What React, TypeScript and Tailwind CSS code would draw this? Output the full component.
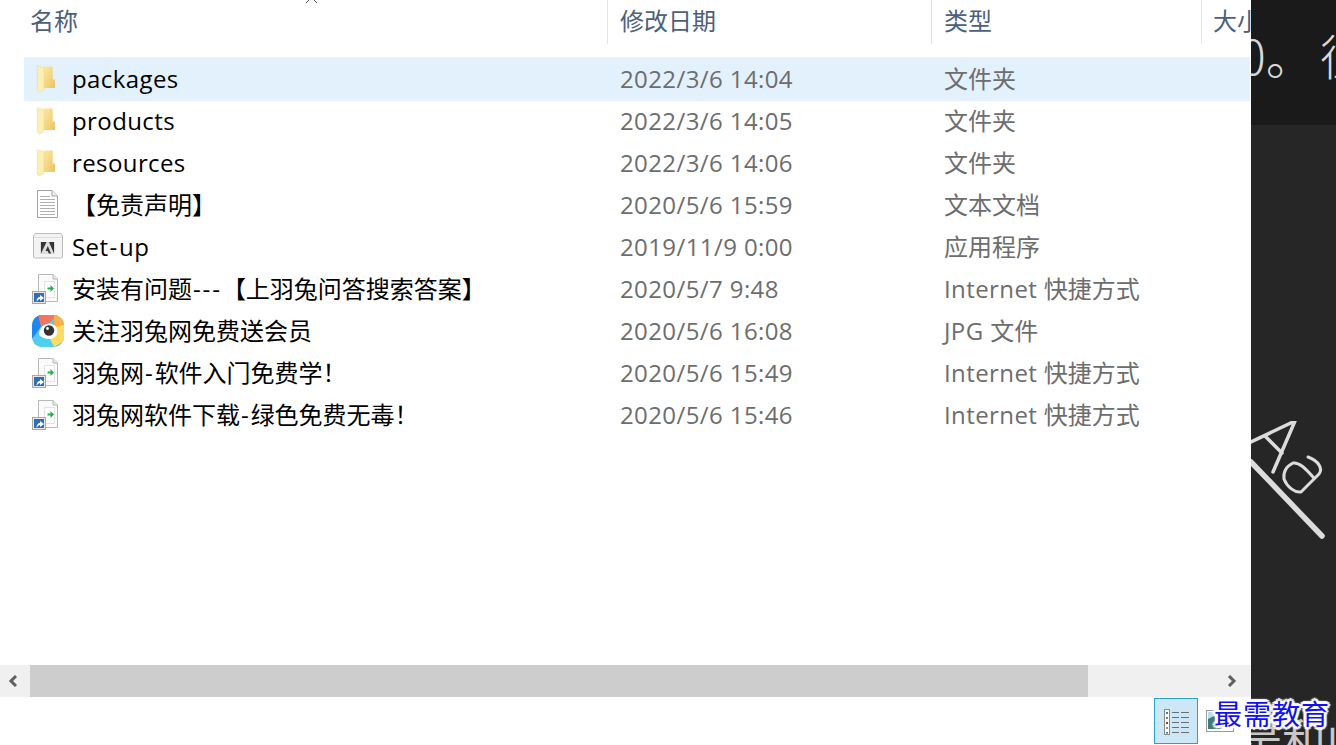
type Kind = "folder" | "text" | "adobe" | "link" | "jpg";

const rows: { name: string; date: string; type: string; kind: Kind }[] = [
  { name: "packages", date: "2022/3/6 14:04", type: "文件夹", kind: "folder" },
  { name: "products", date: "2022/3/6 14:05", type: "文件夹", kind: "folder" },
  { name: "resources", date: "2022/3/6 14:06", type: "文件夹", kind: "folder" },
  { name: "【免责声明】", date: "2020/5/6 15:59", type: "文本文档", kind: "text" },
  { name: "Set-up", date: "2019/11/9 0:00", type: "应用程序", kind: "adobe" },
  { name: "安装有问题---【上羽兔问答搜索答案】", date: "2020/5/7 9:48", type: "Internet 快捷方式", kind: "link" },
  { name: "关注羽兔网免费送会员", date: "2020/5/6 16:08", type: "JPG 文件", kind: "jpg" },
  { name: "羽兔网-软件入门免费学！", date: "2020/5/6 15:49", type: "Internet 快捷方式", kind: "link" },
  { name: "羽兔网软件下载-绿色免费无毒！", date: "2020/5/6 15:46", type: "Internet 快捷方式", kind: "link" },
];

const FONT = "font-['Open_Sans','Noto_Sans_CJK_SC',sans-serif]";

// latin text runs a bit wider in the original font than in Open Sans
function Label({ text }: { text: string }) {
  const parts = text.split(/(-+|[\x20-\x2c\x2e-\x7e]+)/).filter(Boolean);
  return (
    <>
      {parts.map((part, i) => {
        if (part[0] === "-") {
          return (
            <span key={i} className="ml-[1px] tracking-[1.9px]">
              {part}
            </span>
          );
        }
        if (part.charCodeAt(0) < 127) {
          return (
            <span key={i} className="tracking-[0.4px]">
              {part}
            </span>
          );
        }
        return <span key={i}>{part}</span>;
      })}
    </>
  );
}

function FileIcon({ kind }: { kind: Kind }) {
  if (kind === "folder") {
    return (
      <svg width="32" height="32" viewBox="0 0 32 32">
        <defs>
          <linearGradient id="fb" x1="0" y1="0" x2="1" y2="1">
            <stop offset="0" stopColor="#fbe9a6" />
            <stop offset="1" stopColor="#edc25f" />
          </linearGradient>
        </defs>
        <path d="M12 3.5 L20.7 3.5 L20.7 16.5 L23 16.5 L23 25 L12 25 Z" fill="url(#fb)" />
        <path d="M5.3 2.7 L12 4.6 L12 26.6 L7.4 29 L5.3 27.4 Z" fill="#fdeeb4" stroke="#e8cf86" strokeWidth="0.4" />
      </svg>
    );
  }
  if (kind === "text") {
    return (
      <svg width="32" height="32" viewBox="0 0 32 32">
        <path d="M5.5 1.5 H20 L25.5 7 V28.5 H5.5 Z" fill="#fff" stroke="#a3a3a3" />
        <path d="M20 1.5 V7 H25.5" fill="#eee" stroke="#a3a3a3" />
        <g stroke="#b0b0b0">
          <path d="M8 7.5 H18" />
          <path d="M8 10.5 H23" />
          <path d="M8 13.5 H23" />
          <path d="M8 16.5 H23" />
          <path d="M8 19.5 H23" />
          <path d="M8 22.5 H23" />
          <path d="M8 25.5 H23" />
        </g>
      </svg>
    );
  }
  if (kind === "adobe") {
    return (
      <svg width="32" height="32" viewBox="0 0 32 32">
        <path d="M3 2.5 H29 L30.5 5 V26 L29.5 27 H2.5 L1.5 26 V5 Z" fill="#f3f3f3" stroke="#bdbdbd" />
        <path d="M2 6.5 H30" stroke="#dedede" />
        <rect x="8" y="11" width="15" height="12" fill="#dcdcdc" />
        <path d="M9 11 H14.5 L9 22.5 Z M17 11 H22 V22.5 Z M15.8 15 L19 22.5 H16.8 L15.8 20 H13.6 Z" fill="#333" />
      </svg>
    );
  }
  if (kind === "jpg") {
    return (
      <svg width="32" height="32" viewBox="0 0 32 32">
        <defs>
          <clipPath id="sq">
            <rect x="0" y="0" width="32" height="32" rx="10" />
          </clipPath>
        </defs>
        <g clipPath="url(#sq)">
          <rect width="32" height="32" fill="#54c8f2" />
          <path d="M0 0 H16 L6 16 L0 24 Z" fill="#1f86ee" />
          <path d="M6 0 H26 L16 9 L9 12 Z" fill="#f2765f" />
          <path d="M22 0 H32 V20 L22 12 Z" fill="#fbb04c" />
          <path d="M32 10 V26 L22 32 L18 24 L24 12 Z" fill="#fddc62" />
          <path d="M2 28 L14 22 L22 32 H2 Z" fill="#4cd0ee" />
        </g>
        <path d="M7 20 C7 12 14 7 20 9 C26 11 27 18 23 22 C19 25 12 25 7 20 Z" fill="#fff" />
        <circle cx="17" cy="15.5" r="5.2" fill="#333" />
        <circle cx="15.5" cy="13.5" r="1.4" fill="#fff" />
      </svg>
    );
  }
  return (
    <svg width="32" height="32" viewBox="0 0 32 32">
      <path d="M6.5 1.5 H21 L25.5 6 V28.5 H6.5 Z" fill="#fbfbfb" stroke="#b8b8b8" />
      <path d="M21 1.5 V6 H25.5" fill="#e8e8e8" stroke="#b8b8b8" />
      <path d="M12.5 8.5 V24.5 H22.5 V8.5 Z" fill="#fff" stroke="#e2e2e2" />
      <path d="M15.5 14.5 H18.5 V12 L22 15.5 L18.5 19 V16.5 H15.5 Z" fill="#22b14c" />
      <rect x="0.5" y="18.5" width="13" height="12" fill="#e8e8e8" stroke="#a8a8a8" />
      <rect x="2" y="20" width="10" height="9" fill="#2f6fb8" />
      <path d="M4.5 29 C4.5 25.5 6 24 8 24 V22 L12 25 L8 28 V26 C7 26 5.5 27 4.5 29 Z" fill="#fff" />
    </svg>
  );
}

function DetailsGlyph() {
  return (
    <svg width="28" height="28" viewBox="0 0 28 28">
      <rect x="2.5" y="2.5" width="5" height="25" fill="#fff" stroke="#8a8a8a" />
      <rect x="4" y="5" width="2" height="2" fill="#3a7ca5" />
      <rect x="4" y="10" width="2" height="2" fill="#7a8a4a" />
      <rect x="4" y="15" width="2" height="2" fill="#b5352a" />
      <rect x="4" y="20" width="2" height="2" fill="#9a9a4a" />
      <rect x="4" y="25" width="2" height="1.6" fill="#3a7ca5" />
      <g stroke="#6d6d6d">
        <path d="M10 5.5 H17 M19 5.5 H27" />
        <path d="M10 10.5 H17 M19 10.5 H27" />
        <path d="M10 15.5 H17 M19 15.5 H27" />
        <path d="M10 20.5 H17 M19 20.5 H27" />
        <path d="M10 25.5 H17 M19 25.5 H27" />
      </g>
    </svg>
  );
}

function PreviewGlyph() {
  return (
    <svg width="28" height="22" viewBox="0 0 28 22">
      <rect x="0.5" y="0.5" width="27" height="21" fill="#fff" stroke="#9a9a9a" />
      <rect x="2" y="2" width="24" height="17" fill="#b7dcef" />
      <path d="M2 19 V9 L8 6 L14 12 L18 19 Z" fill="#3f7a78" />
      <path d="M14 19 L20 13 L26 19 Z" fill="#d9e8ee" />
    </svg>
  );
}

function HeaderCell({ label, className }: { label: string; className: string }) {
  return (
    <div className={`flex h-[44px] items-start overflow-hidden border-[#e5e5e5] pt-[5px] text-[24px] leading-[32px] text-[#4c607a] ${className}`}>
      <span className="whitespace-nowrap">{label}</span>
    </div>
  );
}

function ExplorerPane() {
  return (
    <div className={`relative flex h-full w-[1251px] shrink-0 flex-col bg-white ${FONT}`}>
      <svg className="absolute left-[305px] top-0" width="14" height="3" viewBox="0 0 14 3">
        <path d="M1 3 L4 0 M9 0 L12 3" stroke="#555" />
      </svg>
      <div className="flex h-[58px] shrink-0 items-start">
        <HeaderCell label="名称" className="w-[608px] border-r pl-[30px]" />
        <HeaderCell label="修改日期" className="w-[324px] border-r pl-[12px]" />
        <HeaderCell label="类型" className="w-[270px] border-r pl-[12px]" />
        <HeaderCell label="大小" className="flex-1 pl-[11px]" />
      </div>
      <div className="ml-[24px] mr-[1px] flex flex-1 flex-col">
        {rows.map((row, i) => (
          <div
            key={row.name}
            className={`flex items-center text-[24px] ${i === 0 ? "-my-[1px] h-[44px] bg-[#e3f1fc]" : "h-[42px]"}`}
          >
            <div className="flex w-[48px] shrink-0 pl-[8px]">
              <FileIcon kind={row.kind} />
            </div>
            <div className="w-[548px] shrink-0 whitespace-nowrap text-black">
              <Label text={row.name} />
            </div>
            <div className="w-[324px] shrink-0 whitespace-nowrap text-[#6d6d6d]">
              <Label text={row.date} />
            </div>
            <div className="whitespace-nowrap text-[#6d6d6d]">
              <Label text={row.type} />
            </div>
          </div>
        ))}
      </div>
      <div className="flex h-[32px] shrink-0 items-center bg-[#f0f0f0]">
        <div className="flex w-[30px] pl-[8px]">
          <svg width="10" height="12" viewBox="0 0 10 12" fill="none" stroke="#606060" strokeWidth="3">
            <path d="M8 1 L3 6 L8 11" />
          </svg>
        </div>
        <div className="h-full w-[1058px] bg-[#cdcdcd]" />
        <div className="flex flex-1 justify-end pr-[14px]">
          <svg width="10" height="12" viewBox="0 0 10 12" fill="none" stroke="#606060" strokeWidth="3">
            <path d="M2 1 L7 6 L2 11" />
          </svg>
        </div>
      </div>
      <div className="flex h-[48px] shrink-0 items-start justify-end pt-[1px]">
        <div className="flex h-[46px] w-[44px] items-center justify-center border border-[#26a0da] bg-[#cce8f7]">
          <DetailsGlyph />
        </div>
        <div className="ml-[8px] mr-[17px] mt-[12px]">
          <PreviewGlyph />
        </div>
      </div>
    </div>
  );
}

function DarkPane() {
  return (
    <div className="flex h-full flex-1 flex-col overflow-hidden bg-[#262626] font-['Noto_Sans_CJK_SC',sans-serif] text-[#d8d8d8]">
      <div className="flex h-[125px] shrink-0 items-start overflow-hidden bg-[#1a1a1a] pt-[18px]">
        <span className="-ml-[11px] whitespace-nowrap text-[48px] font-light leading-[72px]">0。</span>
        <span className="ml-[6px] whitespace-nowrap text-[48px] font-light leading-[72px]">往</span>
      </div>
      <svg className="mt-[296px] shrink-0" width="85" height="125" viewBox="0 0 85 125" fill="none" stroke="#dcdcdc" strokeLinecap="round" strokeLinejoin="round">
        <path d="M0 19 L44 -2 L22 49 M14 13 L31 30" strokeWidth="3.5" transform="translate(0 2)" />
        <path d="M0 41 L71 115" strokeWidth="5.5" />
        <path d="M57 36 C68 40 72 48 68 53 L50 71 C44 72 36 66 33 58 C32 50 36 45 42 42 C48 41 54 47 62 56" strokeWidth="3" />
      </svg>
      <div className="mt-auto -mb-[22px] -ml-[13px] whitespace-nowrap text-[44px] leading-[60px] text-[#c8c8c8]">是和山</div>
    </div>
  );
}

export default function App() {
  return (
    <div className="relative flex h-[745px] w-[1336px] overflow-hidden">
      <ExplorerPane />
      <DarkPane />
      <div className="absolute left-[1214px] top-[694px] whitespace-nowrap font-['Noto_Sans_CJK_SC',serif] text-[28px] font-normal leading-[38px] tracking-[1px] text-[#1010f0] [text-shadow:0_0_4px_#fff,3px_0_1px_#fff,-3px_0_1px_#fff,0_3px_1px_#fff,0_-3px_1px_#fff,2px_2px_1px_#fff,-2px_-2px_1px_#fff,2px_-2px_1px_#fff,-2px_2px_1px_#fff]">
        最需教育
      </div>
    </div>
  );
}
